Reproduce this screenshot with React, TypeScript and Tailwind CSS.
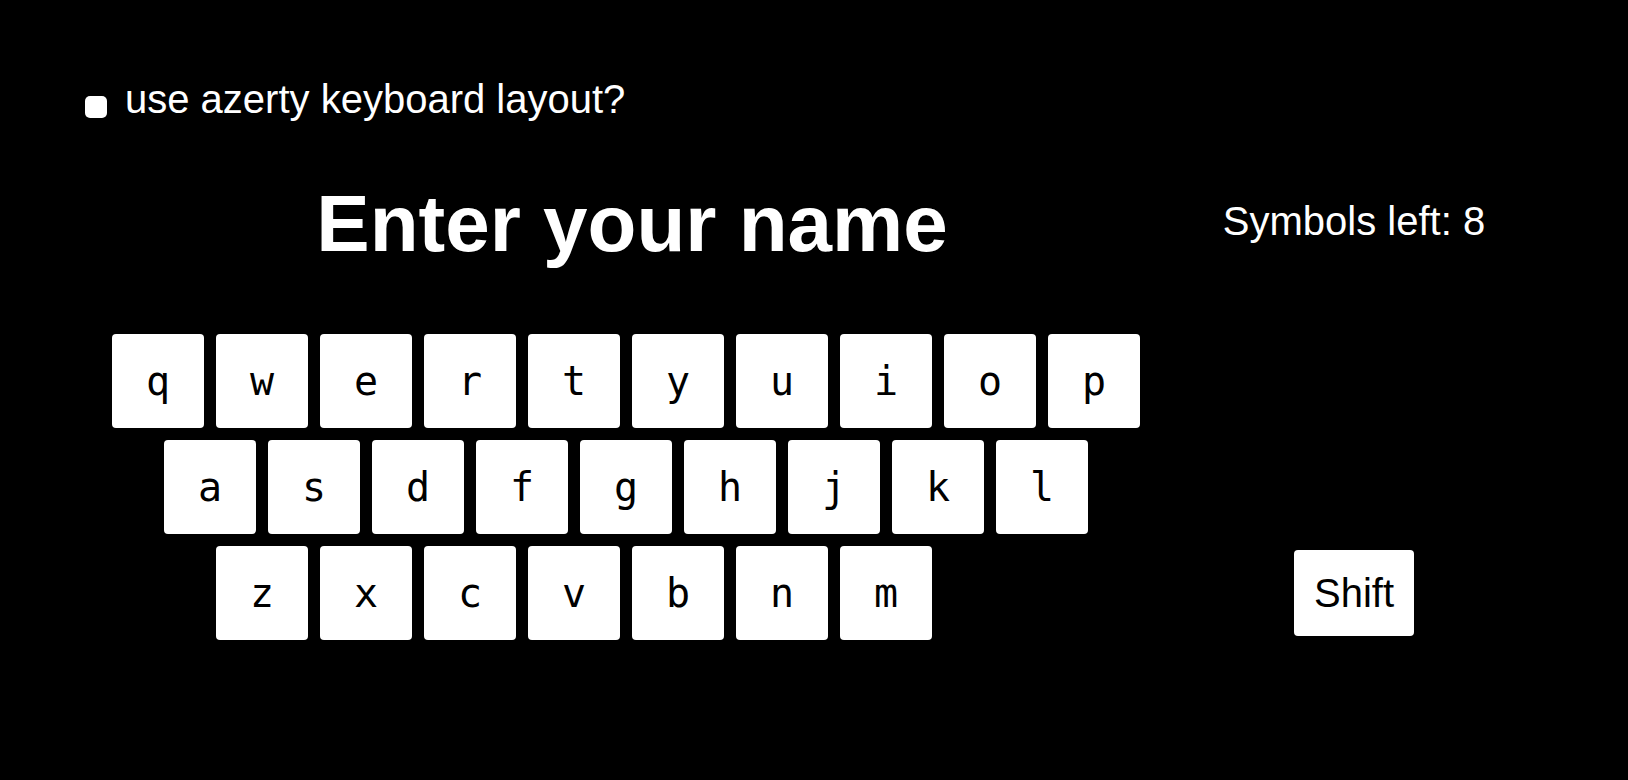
import { useState } from 'react';

const rows = [
  ['q', 'w', 'e', 'r', 't', 'y', 'u', 'i', 'o', 'p'],
  ['a', 's', 'd', 'f', 'g', 'h', 'j', 'k', 'l'],
  ['z', 'x', 'c', 'v', 'b', 'n', 'm'],
];

const rowPad = ['pl-0', 'pl-[52px]', 'pl-[104px]'];

export default function App() {
  const [azerty, setAzerty] = useState(false);
  const [name, setName] = useState('');
  const [shift, setShift] = useState(false);
  const maxLen = 8;

  function press(k: string) {
    if (name.length >= maxLen) return;
    setName(name + (shift ? k.toUpperCase() : k));
  }

  return (
    <div className="min-h-screen w-full bg-black text-white font-['Liberation_Sans',Arial,sans-serif]">
      {/* layout toggle */}
      <label className="flex items-start pt-[79px] pl-[85px]">
        <input
          type="checkbox"
          checked={azerty}
          onChange={() => setAzerty(!azerty)}
          className="appearance-none mt-[17px] w-[22px] h-[22px] rounded-[5px] bg-white"
        />
        <span className="ml-[18px] text-[40px] leading-[40px]">use azerty keyboard layout?</span>
      </label>

      <div className="flex mt-[65px]">
        <div className="ml-[112px] w-[1040px]">
          <h1 className="text-center text-[80px] leading-[80px] font-bold">Enter your name</h1>

          <div className="mt-[70px] flex flex-col gap-[12px]">
            {rows.map((row, i) => (
              <div key={i} className={`flex gap-[12px] ${rowPad[i]}`}>
                {row.map(k => (
                  <button
                    key={k}
                    onClick={() => press(k)}
                    className="w-[92px] h-[94px] rounded-[4px] bg-white text-black flex items-center justify-center text-[40px] font-['DejaVu_Sans_Mono',monospace]"
                  >
                    {shift ? k.toUpperCase() : k}
                  </button>
                ))}
              </div>
            ))}
          </div>
        </div>

        <div className="w-[404px] flex flex-col items-center">
          <div className="mt-[17px] text-[40px] leading-[40px]">Symbols left: {maxLen - name.length}</div>
          <button
            onClick={() => setShift(!shift)}
            className="mt-[309px] w-[120px] h-[86px] rounded-[4px] bg-white text-black text-[40px] flex items-center justify-center"
          >
            Shift
          </button>
        </div>
      </div>
    </div>
  );
}
